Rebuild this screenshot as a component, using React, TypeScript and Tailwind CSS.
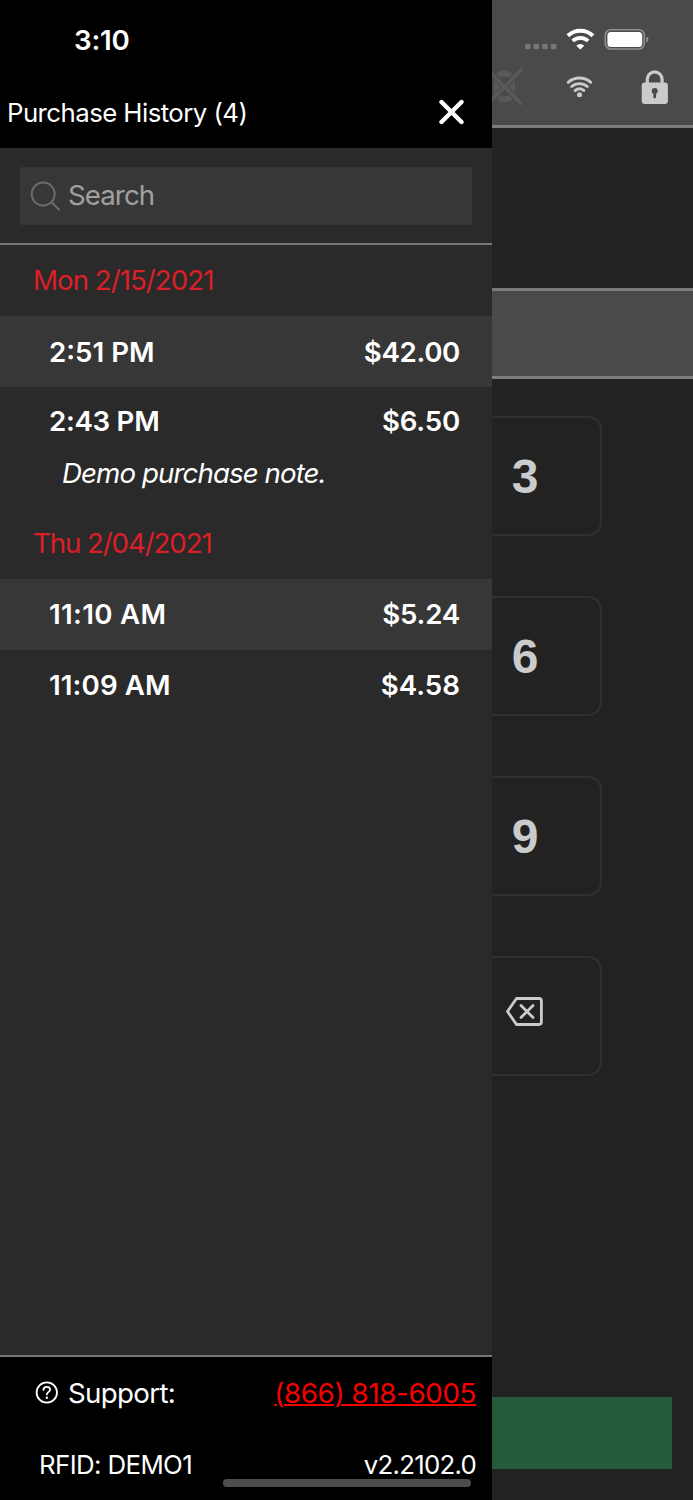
import type { ReactNode } from 'react'

type Purchase = { time: string; amount: string; timeClass: string; amountClass: string; note?: string }
type Day = { date: string; dateClass: string; purchases: Purchase[] }

const days: Day[] = [
  {
    date: 'Mon 2/15/2021',
    dateClass: 'tracking-[-0.98px]',
    purchases: [
      { time: '2:51 PM', amount: '$42.00', timeClass: 'pt-[2px]', amountClass: 'pt-[2px] tracking-[-0.35px]' },
      {
        time: '2:43 PM',
        amount: '$6.50',
        timeClass: 'pb-[2px] tracking-[-0.3px]',
        amountClass: 'pb-[2px] tracking-[-0.2px]',
        note: 'Demo purchase note.',
      },
    ],
  },
  {
    date: 'Thu 2/04/2021',
    dateClass: 'tracking-[-1.12px]',
    purchases: [
      { time: '11:10 AM', amount: '$5.24', timeClass: 'tracking-[0.3px]', amountClass: 'tracking-[-0.2px]' },
      { time: '11:09 AM', amount: '$4.58', timeClass: 'tracking-[0.1px]', amountClass: '' },
    ],
  },
]

function DayGroup({ day }: { day: Day }) {
  return (
    <section>
      <h2 className={`flex h-[71px] items-center pl-[33px] text-[27.7px] text-[#dc1f26] ${day.dateClass}`}>
        {day.date}
      </h2>
      {day.purchases.map((p, i) => (
        <div key={p.time} className={i % 2 === 0 ? 'bg-[#373737]' : ''}>
          <div className="flex h-[71px] items-center justify-between pl-[49px] pr-[32px] text-[27.7px] font-semibold text-white">
            <span className={p.timeClass}>{p.time}</span>
            <span className={p.amountClass}>{p.amount}</span>
          </div>
          {p.note && (
            <p className="-mt-px flex h-[51px] items-start pl-[62px] text-[27.7px] leading-[32px] tracking-[-0.92px] italic text-white">
              {p.note}
            </p>
          )}
        </div>
      ))}
    </section>
  )
}

function Drawer() {
  return (
    <aside className="flex h-full w-[492px] shrink-0 flex-col bg-[#2a2a2a]">
      <header className="flex h-[148px] flex-col bg-black text-white">
        <div className="flex h-[79px] items-center pt-[2px] pl-[74px] text-[27.7px] font-semibold tracking-[-0.2px]">3:10</div>
        <div className="flex h-[67px] items-center justify-between pl-[7px] pr-[27px] text-[25.8px]">
          <h1 className="pt-[2px] tracking-[-0.56px]">Purchase History (4)</h1>
          <svg className="h-[27px] w-[27px]" viewBox="0 0 27 27" stroke="currentColor" strokeWidth="4.4" strokeLinecap="round" aria-label="Close">
            <path d="M3.500 3l20 20M23.500 3l-20 20" />
          </svg>
        </div>
      </header>

      <div className="flex h-[97px] items-center border-b-2 border-[#777] px-[20px]">
        <div className="flex h-[58px] w-full items-center rounded-[2px] bg-[#373737] pl-[10px] text-[27.7px] text-[#a0a0a0]">
          <svg className="mt-px mr-[7px] h-[31px] w-[31px]" viewBox="0 0 31 31" fill="none" stroke="#6b6b6b" strokeWidth="2">
            <circle cx="13.200" cy="13" r="11.500" />
            <path d="M21.300 21l8.300 8.300" />
          </svg>
          <span className="pt-px tracking-[-0.95px]">Search</span>
        </div>
      </div>

      <div className="flex-1">
        {days.map((day) => (
          <DayGroup key={day.date} day={day} />
        ))}
      </div>

      <footer className="relative h-[145px] border-t-2 border-[#777] bg-black pt-px text-white">
        <div className="flex h-[71px] items-center justify-between pl-[35px] pr-[16px] text-[27.7px]">
          <div className="flex items-center">
            <svg className="mr-[10px] mb-[2px] h-[23px] w-[23px]" viewBox="0 0 23 23" fill="none" stroke="currentColor" strokeWidth="1.8" strokeLinecap="round">
              <circle cx="11.800" cy="11.500" r="10.200" />
              <path d="M8.400 8.900c.1-2 1.500-3.100 3.400-3.100s3.300 1.200 3.300 2.900c0 2.300-3.300 2.500-3.300 4.700" />
              <path d="M11.800 16.600v.2" strokeWidth="2.400" />
            </svg>
            <span className="tracking-[-0.68px]">Support:</span>
          </div>
          <a href="tel:8668186005" className="tracking-[-0.35px] text-[#f80000] underline decoration-2">
            (866) 818-6005
          </a>
        </div>
        <div className="flex h-[71px] items-center justify-between pt-px pl-[39px] pr-[16px] text-[25.8px]">
          <span className="tracking-[-0.6px]">RFID: DEMO1</span>
          <span className="tracking-[-0.75px]">v2.2102.0</span>
        </div>
        {/* Home indicator */}
        <div className="absolute right-[21px] bottom-[13px] h-[8px] w-[248px] rounded-full bg-[#4d4d4d]" />
      </footer>
    </aside>
  )
}

function StatusIcons() {
  return (
    <div className="flex h-[128px] flex-col border-b-[3px] border-[#7c7c7c] bg-[#4a4a4a]">
      <svg className="h-[62px] w-[201px]" viewBox="0 0 201 62" fill="none">
        {[33, 41.6, 50.2, 58.9].map((x) => (
          <rect key={x} x={x} y="44" width="5.500" height="5.200" rx="1.300" fill="#777" />
        ))}
        <path d="M75.900 35.800a18 18 0 0 1 25 0" stroke="#fff" strokeWidth="4" />
        <path d="M80.700 41a11 11 0 0 1 15.400 0" stroke="#fff" strokeWidth="3.700" />
        <path d="M84.300 45.700a5.700 5.700 0 0 1 8 0l-4 3.800z" fill="#fff" />
        <rect x="113.300" y="29.800" width="39" height="19.200" rx="5.500" stroke="#8f8f8f" strokeWidth="1.600" />
        <rect x="115.400" y="32" width="34.800" height="14.900" rx="3.500" fill="#fff" />
        <path d="M154.200 36.500q2.200.6 2.200 3t-2.200 3z" fill="#8f8f8f" />
      </svg>
      <svg className="h-[50px] w-[201px]" viewBox="0 62 201 50" fill="none">
        {/* Muted */}
        <path d="M3 75a13 13 0 0 1 19 0l-4.500 3.500a7 7 0 0 0-10 0z" fill="#57595b" />
        <path d="M3 98a13 13 0 0 0 19 0l-4.500-3.500a7 7 0 0 1-10 0z" fill="#57595b" />
        <path d="M23 77v19.500l-8-9.700zM2 77v19.500l8-9.700z" fill="#57595b" />
        <path d="M-4 69.500L29.500 104M-4 104L29.500 69.500" stroke="#4a4a4a" strokeWidth="6" />
        <path d="M-5 69L30 104.500M-5 104.500L30 69" stroke="#57595b" strokeWidth="3.600" />
        <g stroke="#cbcbcb" strokeWidth="2.900" strokeLinecap="round">
          <path d="M76.200 82.300a17 17 0 0 1 22.600 0" />
          <path d="M79.700 86.500a12 12 0 0 1 15.600 0" />
          <path d="M83.200 90.500a7 7 0 0 1 8.600 0" />
        </g>
        <circle cx="87.500" cy="94.700" r="2.500" fill="#cbcbcb" />
        <path d="M155.300 85v-5.700a7.400 7.400 0 0 1 14.800 0V85" stroke="#cbcbcb" strokeWidth="3.200" />
        <rect x="149.700" y="82.500" width="26.200" height="21.500" rx="3" fill="#cbcbcb" />
        <circle cx="162.700" cy="91" r="3" fill="#4a4a4a" />
        <path d="M162.700 92v5" stroke="#4a4a4a" strokeWidth="2.800" strokeLinecap="round" />
      </svg>
    </div>
  )
}

function Key({ children }: { children: ReactNode }) {
  return (
    <div className="flex h-[120px] w-[110px] items-center justify-center rounded-r-[14px] border-2 border-l-0 border-[#303030] pt-[2px] pr-[42px] font-['Liberation_Sans',sans-serif] text-[48px] font-bold text-[#cbcbcb]">
      {children}
    </div>
  )
}

export default function App() {
  return (
    <main className="flex h-[1500px] w-[693px] overflow-hidden bg-[#222] font-['Inter','Liberation_Sans',sans-serif]">
      <Drawer />
      <div className="flex flex-1 flex-col">
        <StatusIcons />
        <div className="mt-[160px] h-[91px] border-y-[3px] border-[#7c7c7c] bg-[#4a4a4a]" />
        <div className="mt-[37px] flex flex-col gap-[60px]">
          <Key>3</Key>
          <Key>6</Key>
          <Key>9</Key>
          <Key>
            <svg className="mr-[2px] mb-[12px] h-[29px] w-[37px] shrink-0" viewBox="0 0 37 29" fill="none" stroke="currentColor" strokeWidth="2.800" strokeLinecap="round" strokeLinejoin="round" aria-label="Delete">
              <path d="M10.500 1.500h22.500q2.400 0 2.400 2.400v21.200q0 2.400-2.400 2.400H10.500L1.500 14.500z" />
              <path d="M15 8.500l12 12M27 8.500l-12 12" />
            </svg>
          </Key>
        </div>
        <div className="mt-auto mr-[21px] mb-[31px] h-[72px] bg-[#255b3a]" />
      </div>
    </main>
  )
}
